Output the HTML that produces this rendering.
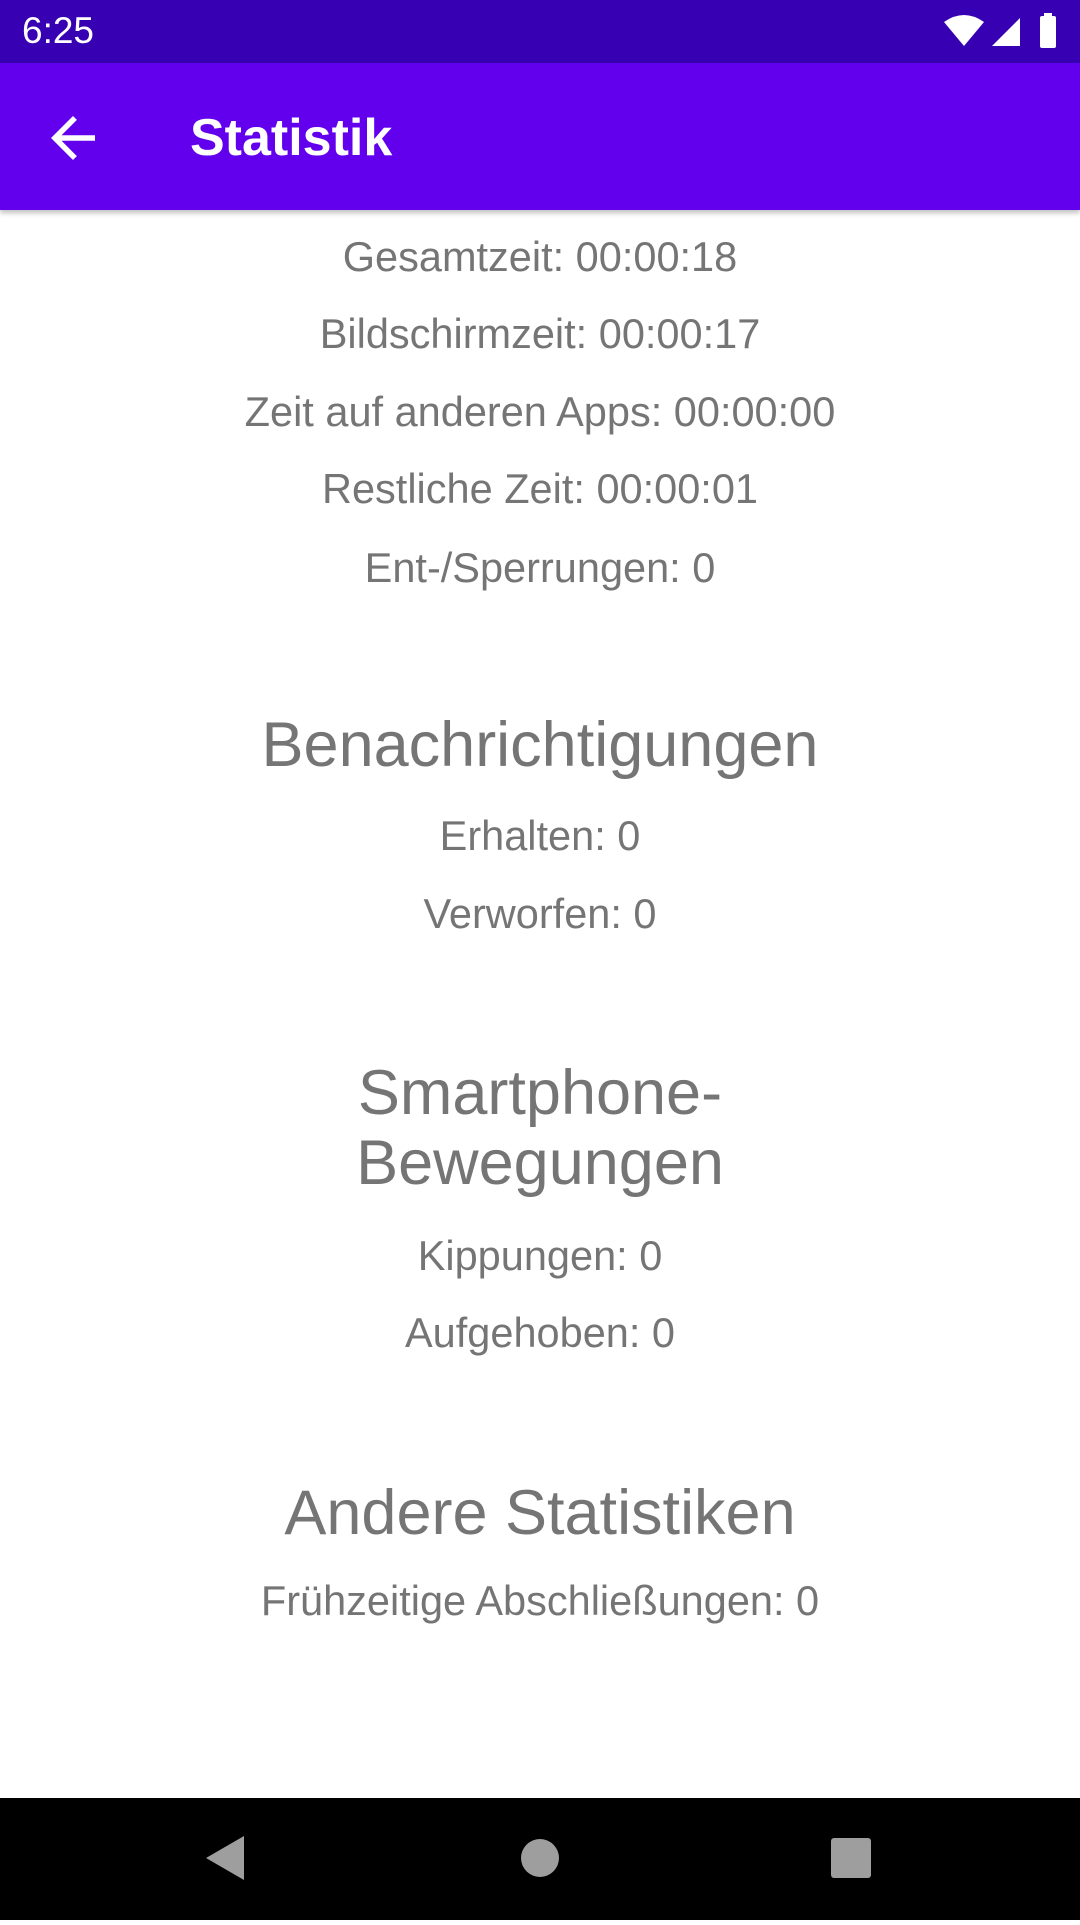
<!DOCTYPE html>
<html><head><meta charset="utf-8"><style>
body{margin:0;width:1080px;height:1920px;position:relative;background:#fff;font-family:"Liberation Sans",Roboto,sans-serif;overflow:hidden}
.sb{position:absolute;top:0;left:0;width:1080px;height:63px;background:#3700B3}
.ab{position:absolute;top:63px;left:0;width:1080px;height:147px;background:#6200EE;box-shadow:0 3px 5px rgba(0,0,0,.25)}
.t{position:absolute;left:0;width:1080px;text-align:center;color:#757575;font-size:41.5px;line-height:48px}
.h{font-size:63px;line-height:72px}
.nav{position:absolute;top:1798px;left:0;width:1080px;height:122px;background:#000}
</style></head><body>
<div class="sb"><div style="position:absolute;left:22px;top:10px;color:#fff;font-size:37px">6:25</div>
<svg style="position:absolute;left:940px;top:12px" width="120" height="40" viewBox="0 0 120 40">
<path d="M4 10 Q24 -4 44 10 L24 34 Z" fill="#fff"/>
<path d="M52 34 L80 6 L80 34 Z" fill="#fff"/>
<rect x="100" y="4" width="16" height="32" rx="2" fill="#fff"/><rect x="104" y="1" width="8" height="4" fill="#fff"/>
</svg></div>
<div class="ab">
<svg style="position:absolute;left:40px;top:42px" width="66" height="66" viewBox="0 0 24 24"><path d="M20 11H7.83l5.59-5.59L12 4l-8 8 8 8 1.41-1.41L7.83 13H20v-2z" fill="#fff"/></svg>
<div style="position:absolute;left:190px;top:46px;color:#fff;font-size:52px;font-weight:bold;line-height:58px">Statistik</div>
</div>
<div class="t" style="top:233px">Gesamtzeit: 00:00:18</div>
<div class="t" style="top:310px">Bildschirmzeit: 00:00:17</div>
<div class="t" style="top:388px">Zeit auf anderen Apps: 00:00:00</div>
<div class="t" style="top:465px">Restliche Zeit: 00:00:01</div>
<div class="t" style="top:544px">Ent-/Sperrungen: 0</div>
<div class="t h" style="top:709px">Benachrichtigungen</div>
<div class="t" style="top:812px">Erhalten: 0</div>
<div class="t" style="top:890px">Verworfen: 0</div>
<div class="t h" style="top:1057px">Smartphone-</div>
<div class="t h" style="top:1127px">Bewegungen</div>
<div class="t" style="top:1232px">Kippungen: 0</div>
<div class="t" style="top:1309px">Aufgehoben: 0</div>
<div class="t h" style="top:1477px">Andere Statistiken</div>
<div class="t" style="top:1577px">Frühzeitige Abschließungen: 0</div>
<div class="nav">
<svg width="1080" height="122"><path d="M206 60 L244 38 L244 82 Z" fill="#9e9e9e"/><circle cx="540" cy="60" r="19" fill="#9e9e9e"/><rect x="831" y="40" width="40" height="40" rx="3" fill="#9e9e9e"/></svg>
</div>
</body></html>
